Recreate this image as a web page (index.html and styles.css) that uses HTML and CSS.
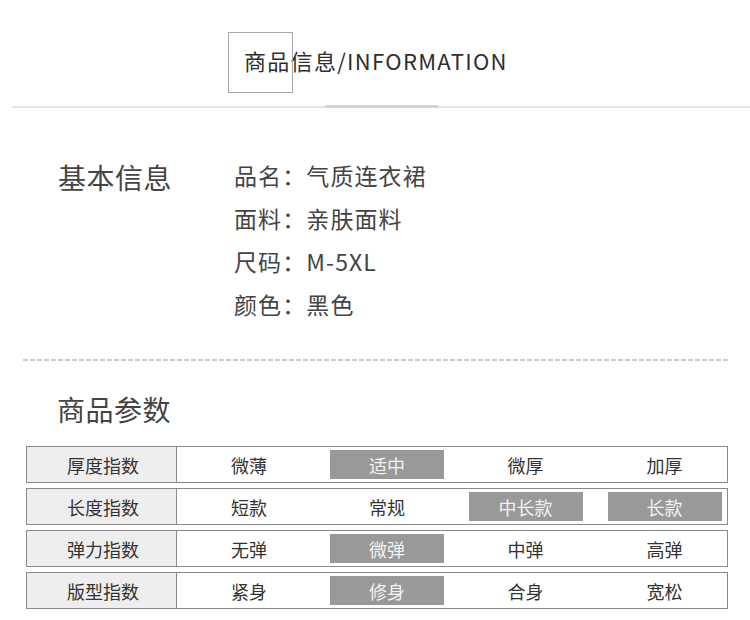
FILE: index.html
```html
<!DOCTYPE html>
<html lang="zh">
<head>
<meta charset="utf-8">
<link rel="stylesheet" href="styles.css">
</head>
<body>
<header class="header">
  <div class="title">商品信息/INFORMATION</div>
</header>
<div class="rule"><span class="rule-mark"></span></div>

<section class="basic">
  <h2 class="basic-heading">基本信息</h2>
  <ul class="info">
    <li>品名：气质连衣裙</li>
    <li>面料：亲肤面料</li>
    <li>尺码：M-5XL</li>
    <li>颜色：黑色</li>
  </ul>
</section>

<div class="dash"></div>

<h2 class="params-heading">商品参数</h2>

<div class="table">
  <div class="row">
    <div class="label">厚度指数</div>
    <div class="values">
      <span class="val">微薄</span>
      <span class="val on">适中</span>
      <span class="val">微厚</span>
      <span class="val">加厚</span>
    </div>
  </div>
  <div class="row">
    <div class="label">长度指数</div>
    <div class="values">
      <span class="val">短款</span>
      <span class="val">常规</span>
      <span class="val on">中长款</span>
      <span class="val on">长款</span>
    </div>
  </div>
  <div class="row">
    <div class="label">弹力指数</div>
    <div class="values">
      <span class="val">无弹</span>
      <span class="val on">微弹</span>
      <span class="val">中弹</span>
      <span class="val">高弹</span>
    </div>
  </div>
  <div class="row">
    <div class="label">版型指数</div>
    <div class="values">
      <span class="val">紧身</span>
      <span class="val on">修身</span>
      <span class="val">合身</span>
      <span class="val">宽松</span>
    </div>
  </div>
</div>
</body>
</html>
```

FILE: styles.css
```css
* { box-sizing: border-box; }
html, body { margin: 0; padding: 0; background: #fff; }
body {
  width: 750px;
  height: 620px;
  overflow: hidden;
  font-family: "Noto Sans CJK SC", "Noto Sans", sans-serif;
  color: #333;
}

.header {
  padding: 32px 0 0 228px;
}
.title {
  position: relative;
  display: inline-block;
  height: 59px;
  line-height: 56px;
  padding-left: 16px;
  font-size: 22px;
  font-weight: 400;
  letter-spacing: 1.3px;
  color: #2e2e2e;
  white-space: nowrap;
}
.title::before {
  content: "";
  position: absolute;
  left: 0;
  top: 0;
  width: 63px;
  height: 59px;
  border: 1px solid #a8a8a8;
}

.rule {
  position: relative;
  margin: 15px 0 0 12px;
  height: 2px;
  background: #e6e3ec;
}
.rule-mark {
  position: absolute;
  left: 313px;
  top: -1px;
  width: 113px;
  height: 3px;
  background: #d6d0e1;
}

.basic {
  display: flex;
  align-items: flex-start;
  padding: 46px 0 0 58px;
}
.basic-heading {
  margin: 2px 0 0;
  width: 176px;
  font-size: 28px;
  line-height: 43px;
  font-weight: 400;
  color: #444;
  letter-spacing: 0.5px;
}
.info {
  list-style: none;
  margin: 0;
  padding: 0;
}
.info li {
  font-size: 23px;
  line-height: 43px;
  letter-spacing: 1.1px;
  color: #444;
  font-weight: 400;
}

.dash {
  margin: 33px 20px 0 23px;
  height: 2px;
  background: repeating-linear-gradient(to right, #cfc9dc 0 5px, transparent 5px 7px);
}

.params-heading {
  margin: 28px 0 0 57px;
  font-size: 28px;
  line-height: 40px;
  font-weight: 400;
  color: #444;
  letter-spacing: 0.5px;
}

.table {
  margin: 17px 0 0 26px;
  width: 702px;
}
.row {
  display: flex;
  height: 37px;
  margin-bottom: 5px;
  border: 1px solid #8a8a8a;
  background: #fff;
}
.label {
  width: 150px;
  flex: none;
  background: #eeeeee;
  border-right: 1px solid #8a8a8a;
  display: flex;
  align-items: center;
  justify-content: center;
  font-size: 18px;
  color: #333;
  padding-left: 3px;
}
.values {
  flex: 1;
  display: grid;
  grid-template-columns: 138px 138px 139px 139px;
  padding-left: 3px;
  align-items: center;
  justify-items: center;
  overflow: hidden;
}
.val {
  width: 114px;
  height: 29px;
  display: flex;
  align-items: center;
  justify-content: center;
  font-size: 18px;
  color: #333;
}
.val.on {
  background: #999;
  color: #f2f2f2;
}
```
